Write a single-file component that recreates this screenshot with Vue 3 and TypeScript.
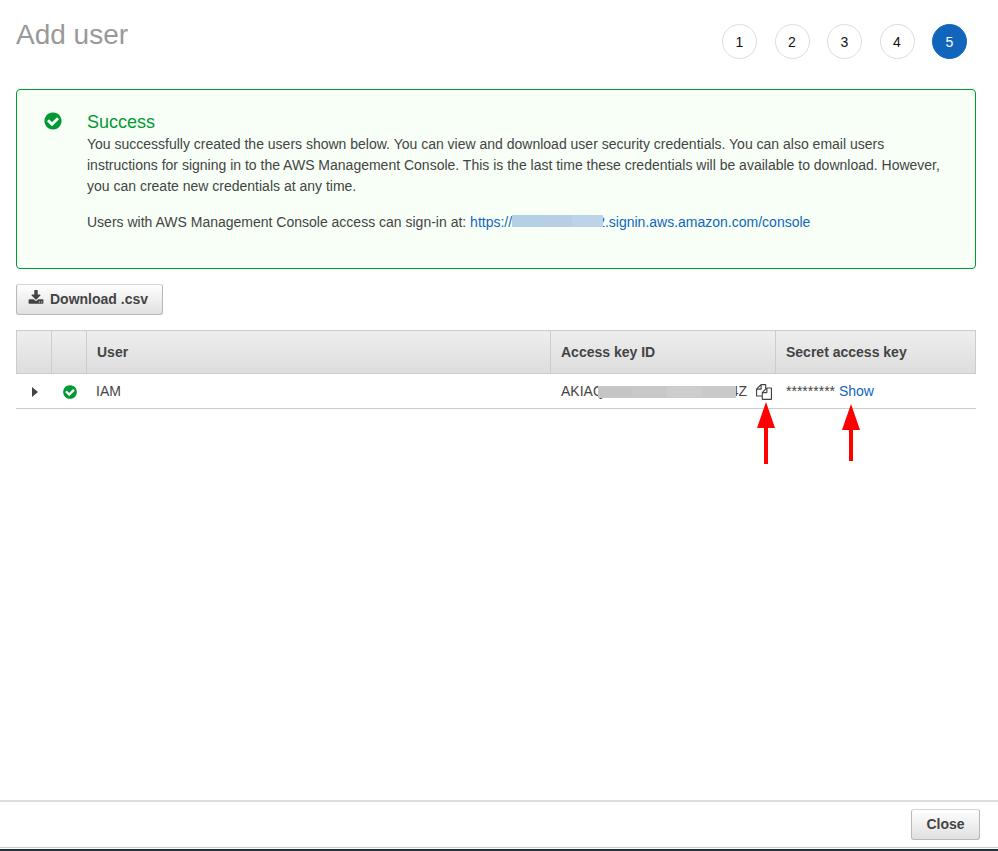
<script setup lang="ts">
import { ref } from 'vue'

interface User {
  name: string
  keyStart: string
  keyEnd: string
}

const steps: number[] = [1, 2, 3, 4, 5]
const currentStep = ref<number>(5)
const users: User[] = [{ name: 'IAM', keyStart: 'AKIAQ', keyEnd: '4Z' }]

const checkPath =
  'M1412 734q0-28-18-46l-91-90q-19-19-45-19t-45 19l-408 407-226-226q-19-19-45-19t-45 19l-91 90q-18 18-18 46 0 27 18 45l362 362q19 19 45 19 27 0 46-19l543-543q18-18 18-45zm252 162q0 209-103 385.5t-279.5 279.5-385.5 103-385.5-103-279.5-279.5-103-385.5 103-385.5 279.5-279.5 385.5-103 385.5 103 279.5 279.5 103 385.5z'
const downloadPath =
  'M1344 1344q0-26-19-45t-45-19-45 19-19 45 19 45 45 19 45-19 19-45zm256 0q0-26-19-45t-45-19-45 19-19 45 19 45 45 19 45-19 19-45zm128-224v320q0 40-28 68t-68 28h-1472q-40 0-68-28t-28-68v-320q0-40 28-68t68-28h465l135 136q58 56 136 56t136-56l136-136h464q40 0 68 28t28 68zm-325-569q17 41-14 70l-448 448q-18 19-45 19t-45-19l-448-448q-31-29-14-70 17-39 59-39h256v-448q0-26 19-45t45-19h256q26 0 45 19t19 45v448h256q42 0 59 39z'
const copyPath =
  'M1696 384q40 0 68 28t28 68v1216q0 40-28 68t-68 28h-960q-40 0-68-28t-28-68v-288h-544q-40 0-68-28t-28-68v-672q0-40 20-88t48-76l408-408q28-28 76-48t88-20h416q40 0 68 28t28 68v328q68-40 128-40h416zm-544 213l-299 299h299v-299zm-640-384l-299 299h299v-299zm196 647l316-316v-416h-384v416q0 40-28 68t-68 28h-416v640h512v-256q0-40 20-88t48-76zm956 804v-1152h-384v416q0 40-28 68t-68 28h-416v640h896z'
</script>

<template>
  <div class="page">
    <header class="header">
      <h1 class="title">Add user</h1>
      <ol class="steps">
        <li v-for="step in steps" :key="step" class="step" :class="{ active: step === currentStep }">
          {{ step }}
        </li>
      </ol>
    </header>

    <main class="content">
      <section class="alert">
        <svg class="alert-icon" viewBox="0 0 1792 1792" aria-hidden="true"><path :d="checkPath" /></svg>
        <div class="alert-body">
          <h2 class="alert-title">Success</h2>
          <p>
            You successfully created the users shown below. You can view and download user security
            credentials. You can also email users instructions for signing in to the AWS Management
            Console. This is the last time these credentials will be available to download. However,
            you can create new credentials at any time.
          </p>
          <p>
            Users with AWS Management Console access can sign-in at:
            <a href="#" class="link">https://<span class="mask mask-blue"></span>2.signin.aws.amazon.com/console</a>
          </p>
        </div>
      </section>

      <button type="button" class="button download">
        <svg class="icon" viewBox="0 0 1792 1792" aria-hidden="true"><path :d="downloadPath" /></svg>
        Download .csv
      </button>

      <table class="users">
        <colgroup>
          <col class="col-icon" />
          <col class="col-icon" />
          <col />
          <col class="col-key" />
          <col class="col-secret" />
        </colgroup>
        <thead>
          <tr>
            <th></th>
            <th></th>
            <th>User</th>
            <th>Access key ID</th>
            <th>Secret access key</th>
          </tr>
        </thead>
        <tbody>
          <tr v-for="user in users" :key="user.name">
            <td class="icon-cell">
              <button type="button" class="bare" aria-label="Expand">
                <svg class="caret" viewBox="0 0 6 10"><path d="M0 0L6 5L0 10Z" /></svg>
              </button>
            </td>
            <td class="icon-cell">
              <svg class="icon ok" viewBox="0 0 1792 1792" aria-hidden="true"><path :d="checkPath" /></svg>
            </td>
            <td>{{ user.name }}</td>
            <td>
              <div class="key">
                <span>{{ user.keyStart }}<span class="mask mask-grey"></span>{{ user.keyEnd }}</span>
                <button type="button" class="bare anchor" aria-label="Copy">
                  <svg class="icon" viewBox="0 0 1792 1792"><path :d="copyPath" /></svg>
                  <svg class="arrow arrow-copy" viewBox="0 0 18 62" aria-hidden="true">
                    <path d="M9 0L18 26H11V62H7V26H0Z" />
                  </svg>
                </button>
              </div>
            </td>
            <td>
              *********
              <a href="#" class="link anchor">Show<svg class="arrow arrow-show" viewBox="0 0 18 57" aria-hidden="true">
                <path d="M9 0L18 26H11V57H7V26H0Z" />
              </svg></a>
            </td>
          </tr>
        </tbody>
      </table>
    </main>

    <footer class="footer">
      <button type="button" class="button">Close</button>
    </footer>
    <div class="bottom-bar"></div>
  </div>
</template>

<style>
body {
  margin: 0;
  background: #fff;
}
</style>

<style scoped>
.page {
  display: flex;
  flex-direction: column;
  box-sizing: border-box;
  min-height: 100vh;
  font: 14px/21px "Liberation Sans", Arial, sans-serif;
  color: #444;
}

.header {
  display: flex;
  justify-content: space-between;
  align-items: flex-start;
  padding: 18px 31px 30px 16px;
}

.title {
  margin: 0;
  font-size: 28px;
  line-height: 34px;
  font-weight: 400;
  color: #999;
}

.steps {
  display: flex;
  justify-content: space-between;
  width: 245px;
  margin: 6px 0 0;
  padding: 0;
  list-style: none;
}

.step {
  box-sizing: border-box;
  width: 35px;
  height: 35px;
  border: 1px solid #ddd;
  border-radius: 50%;
  line-height: 34px;
  text-align: center;
  color: #111;
}

.step.active {
  border-color: #1166bb;
  background: #1166bb;
  color: #fff;
}

.content {
  flex: 1;
  padding: 0 22px 0 16px;
}

.alert {
  display: flex;
  gap: 24px;
  padding: 20px 28px 20px 26px;
  border: 1px solid #093;
  border-radius: 4px;
  background: #f7fff7;
}

.alert-icon {
  flex: none;
  width: 20px;
  height: 20px;
  margin-top: 1px;
  fill: #093;
}

.alert-title {
  margin: 0;
  font-size: 18px;
  line-height: 24px;
  font-weight: 400;
  color: #093;
}

.alert p {
  margin: 0 0 15px;
}

.link {
  color: #1166bb;
  text-decoration: none;
}

.mask {
  display: inline-block;
  position: relative;
  height: 12px;
}

.mask-blue {
  width: 91px;
  margin-right: -6px;
  background: linear-gradient(90deg, #b3d0e5 0 33%, #b7cee4 33% 66%, #bdd3e8 66%);
}

.mask-grey {
  width: 138px;
  margin: 0 -5px 0 -6px;
  vertical-align: -2px;
  background: linear-gradient(90deg, #c5c5c5 0 25%, #c8c8c8 25% 50%, #cdcdcd 50% 75%, #cacaca 75%);
}

.button {
  display: inline-flex;
  align-items: center;
  justify-content: center;
  box-sizing: border-box;
  height: 31px;
  min-width: 69px;
  padding: 0 14px;
  border: 1px solid #b8b8b8;
  border-top-color: #d5d5d5;
  border-radius: 3px;
  background: linear-gradient(#fff, #e0e0e0);
  font: bold 14px/21px "Liberation Sans", Arial, sans-serif;
  color: #444;
}

.download {
  gap: 6px;
  margin: 15px 0;
  padding: 0 14px 0 11px;
}

.download .icon {
  margin-bottom: 4px;
}

.icon {
  display: block;
  width: 16px;
  height: 16px;
  fill: #444;
}

.icon.ok {
  margin: 0 auto;
  fill: #093;
}

.users {
  width: 100%;
  table-layout: fixed;
  border-collapse: separate;
  border-spacing: 0;
}

.col-icon {
  width: 35px;
}

.col-key {
  width: 225px;
}

.col-secret {
  width: 201px;
}

.users th {
  height: 42px;
  padding: 0 10px;
  border: 1px solid #ccc;
  border-right: 0;
  background: linear-gradient(#eee, #ddd);
  text-align: left;
}

.users th:last-child {
  border-right: 1px solid #ccc;
}

.users td {
  box-sizing: border-box;
  height: 35px;
  padding: 0 0 0 10px;
  border-bottom: 1px solid #ccc;
  white-space: nowrap;
}

.users .icon-cell {
  padding: 2px 0 0 2px;
}

.key {
  display: flex;
  align-items: center;
  justify-content: space-between;
  padding: 0 3px 0 1px;
}

.users td:last-child {
  padding-left: 11px;
}

.bare {
  display: block;
  padding: 0;
  border: 0;
  background: none;
}

.icon-cell .bare {
  margin: 0 auto;
}

.caret {
  display: block;
  width: 6px;
  height: 10px;
  fill: #444;
}

.anchor {
  position: relative;
}

.key .anchor {
  margin-top: 2px;
}

.arrow {
  position: absolute;
  width: 18px;
  fill: #f00;
}

.arrow-copy {
  top: 18px;
  left: 1px;
  height: 62px;
}

.arrow-show {
  top: 21px;
  left: 3px;
  height: 57px;
}

.footer {
  display: flex;
  justify-content: flex-end;
  padding: 7px 18px;
  border-top: 2px solid #ddd;
  border-bottom: 1px solid #ccc;
}

.bottom-bar {
  height: 2px;
  margin-top: 1px;
  background: #232f3e;
}
</style>
